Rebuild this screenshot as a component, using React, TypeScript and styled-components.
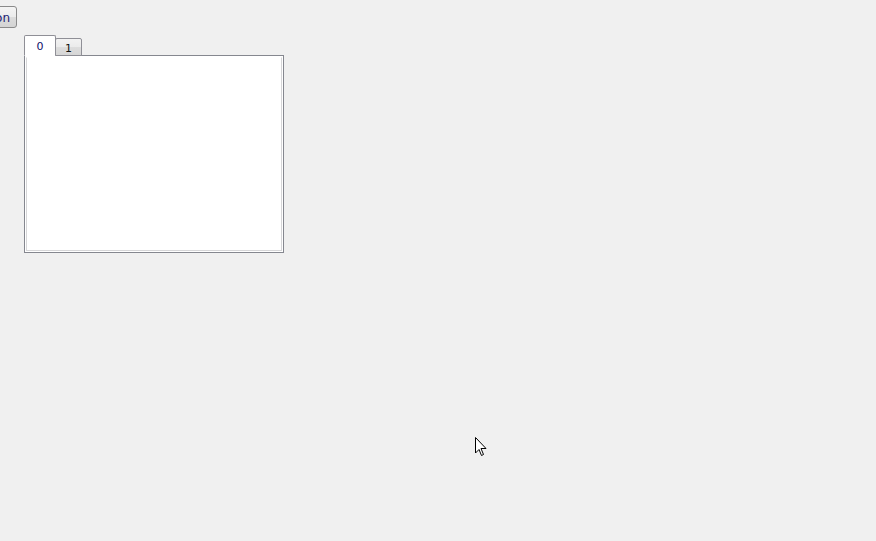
import React, { useState } from 'react'
import styled, { createGlobalStyle } from 'styled-components'

const GlobalStyle = createGlobalStyle`
  html, body {
    margin: 0;
    padding: 0;
    background: #f0f0f0;
    overflow: hidden;
  }
  body {
    font-family: 'DejaVu Sans', 'Liberation Sans', sans-serif;
    font-size: 11px;
  }
`;

const Page = styled.div`
  position: relative;
  width: 876px;
  height: 541px;
  padding-top: 6px;
  box-sizing: border-box;
`;

const PushButton = styled.button`
  display: block;
  height: 22px;
  width: 56px;
  margin-left: -39px;
  padding: 2px 6px 0 0;
  text-align: right;
  border: 1px solid #8a8a8a;
  border-radius: 3px;
  background: linear-gradient(#f4f4f4 0%, #ececec 50%, #dcdcdc 51%, #d4d4d4 100%);
  color: #1b1b73;
  font-family: 'DejaVu Sans', sans-serif;
  font-size: 12px;
`;

const TabWidget = styled.div`
  margin: 7px 0 0 24px;
  width: 260px;
`;

const TabBar = styled.div`
  display: flex;
  align-items: flex-end;
  height: 21px;
  position: relative;
  z-index: 1;
`;

const Tab = styled.div<{ $active: boolean }>`
  box-sizing: border-box;
  display: flex;
  align-items: center;
  justify-content: center;
  margin-left: ${p => (p.$active ? '0' : '-1px')};
  width: ${p => (p.$active ? '32px' : '27px')};
  height: ${p => (p.$active ? '21px' : '18px')};
  padding-top: ${p => (p.$active ? '1px' : '2px')};
  border: 1px solid #8f8f96;
  border-bottom: ${p => (p.$active ? '1px solid #ffffff' : '1px solid #8f8f96')};
  border-radius: 2px 2px 0 0;
  background: ${p => (p.$active ? '#ffffff' : 'linear-gradient(#f2f2f2 0%, #ebebeb 50%, #dddddd 51%, #d6d6d6 100%)')};
  color: ${p => (p.$active ? '#10106a' : '#111111')};
  font-size: 11px;
  cursor: default;
`;

const Pane = styled.div`
  box-sizing: border-box;
  margin-top: -1px;
  height: 198px;
  border: 1px solid #85878f;
  padding: 1px;
  background: #ffffff;
`;

const PaneInner = styled.div`
  box-sizing: border-box;
  height: 100%;
  border: 1px solid #d6d6d8;
  border-top-color: #ffffff;
  background: #ffffff;
`;

const Cursor = styled.svg`
  position: absolute;
  left: 475px;
  top: 437px;
  width: 13px;
  height: 20px;
`;

export default function App() {
  const [tab, setTab] = useState(0)
  return (
    <Page>
      <GlobalStyle />
      <PushButton>Button</PushButton>
      <TabWidget>
        <TabBar>
          {[0, 1].map(i => (
            <Tab key={i} $active={tab === i} onClick={() => setTab(i)}>
              {i}
            </Tab>
          ))}
        </TabBar>
        <Pane>
          <PaneInner />
        </Pane>
      </TabWidget>
      <Cursor viewBox="0 0 13 20">
        <path
          d="M0.5 0.5 L0.5 16 L4 12.5 L6.5 18.5 L8.5 17.5 L6 11.5 L11 11.5 Z"
          fill="#ffffff"
          stroke="#000000"
          strokeWidth="1"
          strokeLinejoin="miter"
        />
      </Cursor>
    </Page>
  )
}
